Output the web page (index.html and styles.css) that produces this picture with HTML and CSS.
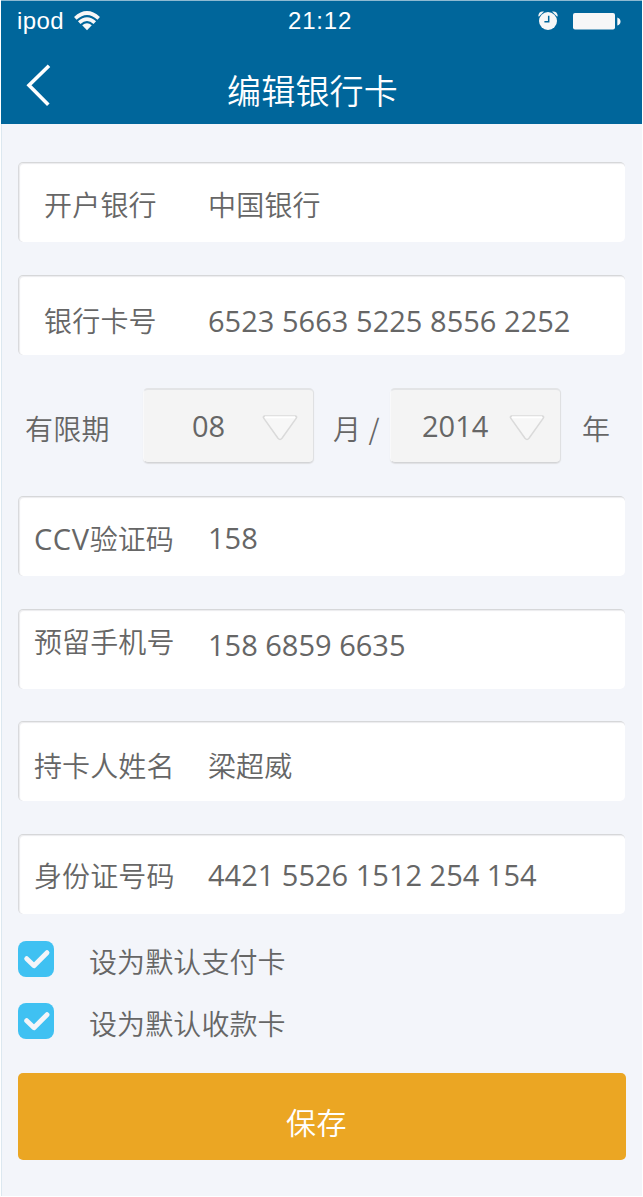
FILE: index.html
```html
<!DOCTYPE html>
<html lang="zh-CN">
<head>
<meta charset="utf-8">
<title>编辑银行卡</title>
<link rel="stylesheet" href="styles.css">
</head>
<body>
<div class="screen">
  <header class="header">
    <div class="status">
      <span class="carrier">ipod</span>
      <svg class="wifi" width="26" height="20" viewBox="0 0 26 20"><g fill="none" stroke="#f7f7f7" stroke-width="3.7"><path d="M1.3 7.3Q13-3.3 24.7 7.3"/><path d="M5.2 11.6Q13 4.6 20.8 11.6"/></g><path d="M8.2 14.3Q13 10.2 17.8 14.3L13 19.2z" fill="#f7f7f7"/></svg>
      <span class="time">21:12</span>
      <svg class="alarm" width="20" height="19" viewBox="0 0 20 19"><g fill="#f7f7f7"><circle cx="10" cy="10" r="9"/><path d="M.3 4.8Q.8-.2 6 .5L.8 5.8z"/><path d="M19.7 4.8Q19.2-.2 14 .5l5.2 5.3z"/></g><path d="M10.7 4.8v6H6.4" fill="none" stroke="#00669b" stroke-width="1.5"/></svg>
      <svg class="battery" width="48" height="17" viewBox="0 0 48 17"><rect width="42" height="16.5" rx="2" fill="#f7f7f7"/><path d="M44.3 4.5q3.2 1 3.2 4t-3.2 4z" fill="#f7f7f7"/></svg>
    </div>
    <div class="titlebar">
      <svg class="back" width="26" height="44" viewBox="0 0 26 44"><path d="M24 2.8L4 22.3 23.3 41.8" fill="none" stroke="#fff" stroke-width="3.6"/></svg>
      <h1 class="title">编辑银行卡</h1>
    </div>
  </header>
  <main class="form">
    <div class="field field-bank"><span class="label">开户银行</span><span class="value">中国银行</span></div>
    <div class="field field-number"><span class="label">银行卡号</span><span class="value num">6523 5663 5225 8556 2252</span></div>
    <div class="expiry">
      <span class="unit">有限期</span>
      <div class="select select-month"><span class="num">08</span><svg class="arrow" width="38" height="28" viewBox="0 0 38 28"><path d="M3.5 2h31q1.8.5.8 2.2L21 24.2q-2 2.4-4 0L2.7 4.2Q1.7 2.5 3.5 2z" fill="#f7f7f7" stroke="#dadada" stroke-width="1.5"/><path d="M4 3.3h30" stroke="#fff" stroke-width="2"/></svg></div>
      <span class="unit unit-month">月 /</span>
      <div class="select select-year"><span class="num">2014</span><svg class="arrow" width="38" height="28" viewBox="0 0 38 28"><path d="M3.5 2h31q1.8.5.8 2.2L21 24.2q-2 2.4-4 0L2.7 4.2Q1.7 2.5 3.5 2z" fill="#f7f7f7" stroke="#dadada" stroke-width="1.5"/><path d="M4 3.3h30" stroke="#fff" stroke-width="2"/></svg></div>
      <span class="unit unit-year">年</span>
    </div>
    <div class="field field-ccv"><span class="label"><span class="num">CCV</span>验证码</span><span class="value num">158</span></div>
    <div class="field field-phone"><span class="label">预留手机号</span><span class="value num">158 6859 6635</span></div>
    <div class="field field-name"><span class="label">持卡人姓名</span><span class="value">梁超威</span></div>
    <div class="field field-id"><span class="label">身份证号码</span><span class="value num">4421 5526 1512 254 154</span></div>
    <div class="checks">
      <div class="check"><span class="box"><svg width="36" height="36" viewBox="0 0 36 36"><path d="M8.7 17.7l7.3 7 13-13" fill="none" stroke="#f4f5f9" stroke-width="4.9" stroke-linecap="round" stroke-linejoin="round"/></svg></span><span class="check-label">设为默认支付卡</span></div>
      <div class="check"><span class="box"><svg width="36" height="36" viewBox="0 0 36 36"><path d="M8.7 17.7l7.3 7 13-13" fill="none" stroke="#f4f5f9" stroke-width="4.9" stroke-linecap="round" stroke-linejoin="round"/></svg></span><span class="check-label">设为默认收款卡</span></div>
    </div>
    <button class="save" type="button">保存</button>
  </main>
</div>
</body>
</html>
```
FILE: styles.css
```css
* { box-sizing: border-box; }
body {
  margin: 0;
  background: #fff;
  color: #666;
  font: 350 28px/40px "Noto Sans CJK SC", sans-serif;
}
.screen {
  width: 641px;
  height: 1196px;
  margin-left: 1px;
  background: #f3f5fa;
  border-left: 1px solid #dce8f0;
}
.header {
  height: 124px;
  margin-left: -1px;
  background: #00669b;
  border-top: 1px solid #8dbad2;
  color: #fff;
}
.status {
  display: flex;
  height: 40px;
  padding-left: 16px;
  font: 24px/40px "Liberation Sans", sans-serif;
}
.carrier { width: 57px; letter-spacing: .4px; }
.wifi { margin-top: 10px; }
.time { width: 70px; margin-left: 188px; letter-spacing: .8px; }
.alarm { margin: 10px 0 0 180px; }
.battery { margin: 12px 0 0 15px; }
.titlebar { display: flex; padding-left: 24px; }
.back { margin-top: 22px; }
.title {
  margin: 24px 0 0 176px;
  font-size: 34px;
  line-height: 50px;
  font-weight: 350;
  letter-spacing: .2px;
}
.form { padding: 38px 16px 0; }
.field {
  display: flex;
  height: 80px;
  margin: 0 1px 33px 0;
  padding-left: 15px;
  background: #fff;
  border-top: 1px solid #d6d7d9;
  border-left: 1px solid #d9dadd;
  border-radius: 5px;
  box-shadow: inset 1px 1px 1px #ececee;
  letter-spacing: .1px;
  white-space: nowrap;
}
.label { width: 174px; }
.num {
  font: 400 29px/40px "Open Sans", "Noto Sans", sans-serif;
}
.field-bank, .field-number { padding-left: 25px; letter-spacing: .2px; }
.field .num { letter-spacing: 0; }
.field-bank .label, .field-number .label { width: 164px; }
.field-bank { padding-top: 21px; }
.field-number { padding-top: 24px; }
.field-number .num { padding-top: 1px; letter-spacing: .03px; }
.field-ccv { padding-top: 21px; }
.field-ccv .label .num { letter-spacing: .6px; }
.field-phone { height: 80px; margin-bottom: 32px; padding-top: 11px; }
.field-phone .value { padding-top: 4px; }
.field-name { padding-top: 23px; }
.field-id { padding-top: 20px; }
.expiry {
  display: flex;
  height: 75px;
  margin-bottom: 33px;
  padding-left: 7px;
}
.unit { width: 118px; padding-top: 20px; white-space: nowrap; letter-spacing: .2px; }
.unit-month { width: 58px; margin-left: 19px; letter-spacing: .6px; }
.unit-year { width: 30px; margin-left: 21px; }
.select {
  display: flex;
  width: 171px;
  height: 75px;
  padding-top: 16px;
  background: #f4f4f4;
  border: 1px solid #dfe0e2;
  border-top: 2px solid #e3e4e6;
  border-bottom-color: #d3d4d6;
  border-left-color: #f9f9fa;
  border-radius: 5px;
  box-shadow: 0 1px 1px #dfe0e3;
}
.select-month { padding-left: 48px; }
.select-year { margin-left: -1px; padding-left: 31px; }
.arrow { margin: 8px 14px 0 auto; }
.checks {
  display: grid;
  gap: 26px;
  padding-top: 27px;
  margin-top: -33px;
}
.check { display: flex; height: 36px; letter-spacing: .1px; }
.box {
  width: 36px;
  height: 36px;
  background: #3fc1f2;
  border-radius: 8px;
}
.box svg { display: block; }
.check-label { padding-left: 35px; }
.save {
  display: block;
  width: 608px;
  height: 87px;
  margin-top: 34px;
  padding: 9px 11px 0 0;
  border: 0;
  border-radius: 5px;
  background: #eba623;
  color: #fff;
  font: 350 30px/40px "Noto Sans CJK SC", sans-serif;
  letter-spacing: .4px;
}
```
